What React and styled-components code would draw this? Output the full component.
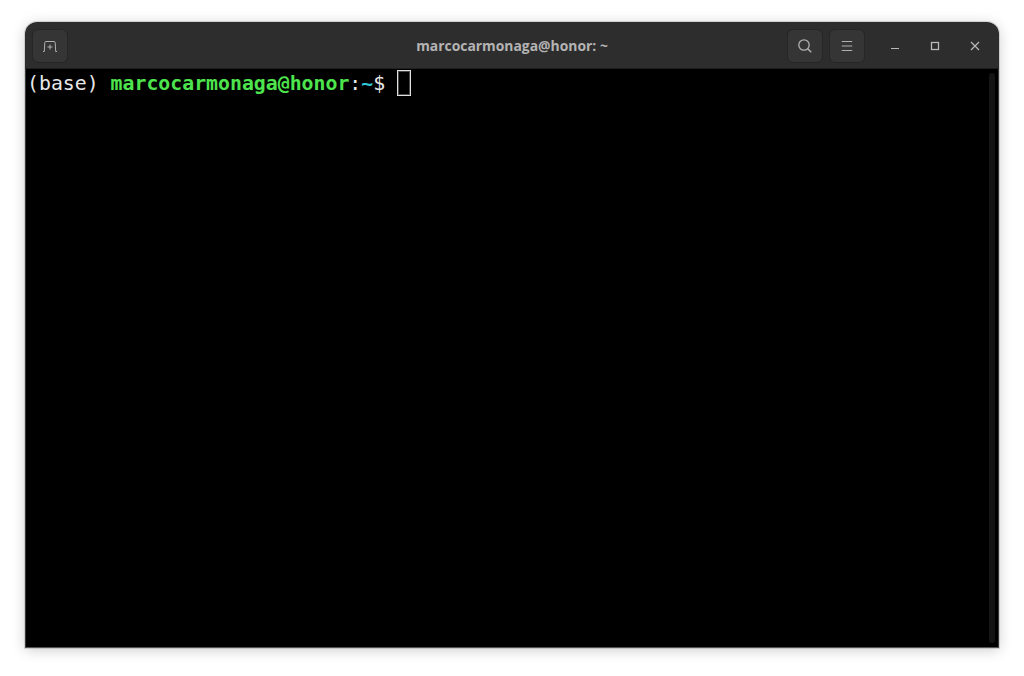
import React from "react"
import styled, { createGlobalStyle } from "styled-components"

const GlobalStyle = createGlobalStyle`
  html, body {
    margin: 0;
    padding: 0;
    background: #ffffff;
  }
`

const Page = styled.div`
  width: 1024px;
  height: 676px;
  box-sizing: border-box;
  padding: 22px 25px 28px 25px;
  overflow: hidden;
`

const Window = styled.div`
  height: 626px;
  display: flex;
  flex-direction: column;
  border-radius: 12px 12px 0 0;
  overflow: hidden;
  box-shadow: 0 0 0 1px rgba(0, 0, 0, 0.12), 0 2px 14px rgba(0, 0, 0, 0.2);
`

const TitleBar = styled.header`
  height: 47px;
  flex: none;
  display: flex;
  align-items: center;
  justify-content: space-between;
  box-sizing: border-box;
  padding: 1px 4px 0 7px;
  background: #2d2d2d;
  border-bottom: 1px solid #1f1f1f;
  position: relative;
`

const Title = styled.h1`
  position: absolute;
  left: 0;
  right: 0;
  top: 15px;
  margin: 0;
  text-align: center;
  font: 700 13.9px/18px "Open Sans", "Liberation Sans", sans-serif;
  color: #b4b4b4;
`

const Controls = styled.div`
  display: flex;
  align-items: center;
`

const HeaderButton = styled.button`
  width: 36px;
  height: 34px;
  padding: 0;
  display: flex;
  align-items: center;
  justify-content: center;
  margin-right: ${({ $gap }) => $gap || 0}px;
  background: #353535;
  border: 1px solid #262626;
  border-radius: 6px;
  color: #b0b0b0;
`

const WindowButton = styled.button`
  width: 40px;
  height: 34px;
  padding: 0;
  display: flex;
  align-items: center;
  justify-content: center;
  background: transparent;
  border: 0;
  color: #b8b8b8;
`

const Terminal = styled.main`
  flex: 1;
  display: flex;
  justify-content: space-between;
  background: #000000;
  border-left: 1px solid #3a3a3a;
  border-right: 1px solid #3a3a3a;
  border-bottom: 1px solid #555555;
  padding: 0 3px 0 1px;
`

const Line = styled.div`
  height: 26px;
  margin-top: 2px;
  display: flex;
  align-items: center;
  font: 400 19.83px/26px "DejaVu Sans Mono", "Liberation Mono", monospace;
  white-space: pre;
  color: #e8e8e8;
`

const Prompt = styled.span`
  color: ${({ $color }) => $color};
  font-weight: ${({ $bold }) => ($bold ? 700 : 400)};
`

const Cursor = styled.span`
  box-sizing: border-box;
  width: 14px;
  height: 26px;
  margin-top: -2px;
  border: 1px solid #e0e0e0;
  box-shadow: inset 0 0 0 1px #4a4a4a;
`

const Scrollbar = styled.div`
  width: 6px;
  margin: 4px 0;
  background: #141414;
  border-radius: 3px;
`

const Icon = ({ size = 16, children }) => (
  <svg width={size} height={size} viewBox="0 0 16 16" fill="none" stroke="currentColor" strokeWidth="1">
    {children}
  </svg>
)

export default function App() {
  return (
    <>
      <GlobalStyle />
      <Page>
        <Window>
          <TitleBar>
            <Title>marcocarmonaga@honor: ~</Title>
            <HeaderButton>
              <Icon>
                <path d="M1 13.5H2.3L2.8 4.5Q2.9 3.5 3.9 3.5H12.1Q13.1 3.5 13.2 4.5L13.7 13.5H15" />
                <path d="M8 6.5V11.5M5.5 9H10.5" />
              </Icon>
            </HeaderButton>
            <Controls>
              <HeaderButton $gap={6}>
                <Icon>
                  <circle cx="7" cy="7" r="5.2" strokeWidth="1.3" />
                  <path d="M10.8 10.8L14.2 14.2" strokeWidth="1.5" />
                </Icon>
              </HeaderButton>
              <HeaderButton $gap={10}>
                <Icon>
                  <path d="M2.8 3.5H13.2M2.8 8H13.2M2.8 12.5H13.2" />
                </Icon>
              </HeaderButton>
              <WindowButton>
                <Icon>
                  <path d="M4 10.5H12" />
                </Icon>
              </WindowButton>
              <WindowButton>
                <Icon>
                  <rect x="4.5" y="4.5" width="7" height="7" strokeWidth="1.3" />
                </Icon>
              </WindowButton>
              <WindowButton>
                <Icon>
                  <path d="M4 4L12 12M12 4L4 12" strokeWidth="1.2" />
                </Icon>
              </WindowButton>
            </Controls>
          </TitleBar>
          <Terminal>
            <Line>
              (base) <Prompt $color="#4ee44e" $bold>marcocarmonaga@honor</Prompt>:<Prompt $color="#2fc7d8" $bold>~</Prompt>$ <Cursor />
            </Line>
            <Scrollbar />
          </Terminal>
        </Window>
      </Page>
    </>
  )
}
